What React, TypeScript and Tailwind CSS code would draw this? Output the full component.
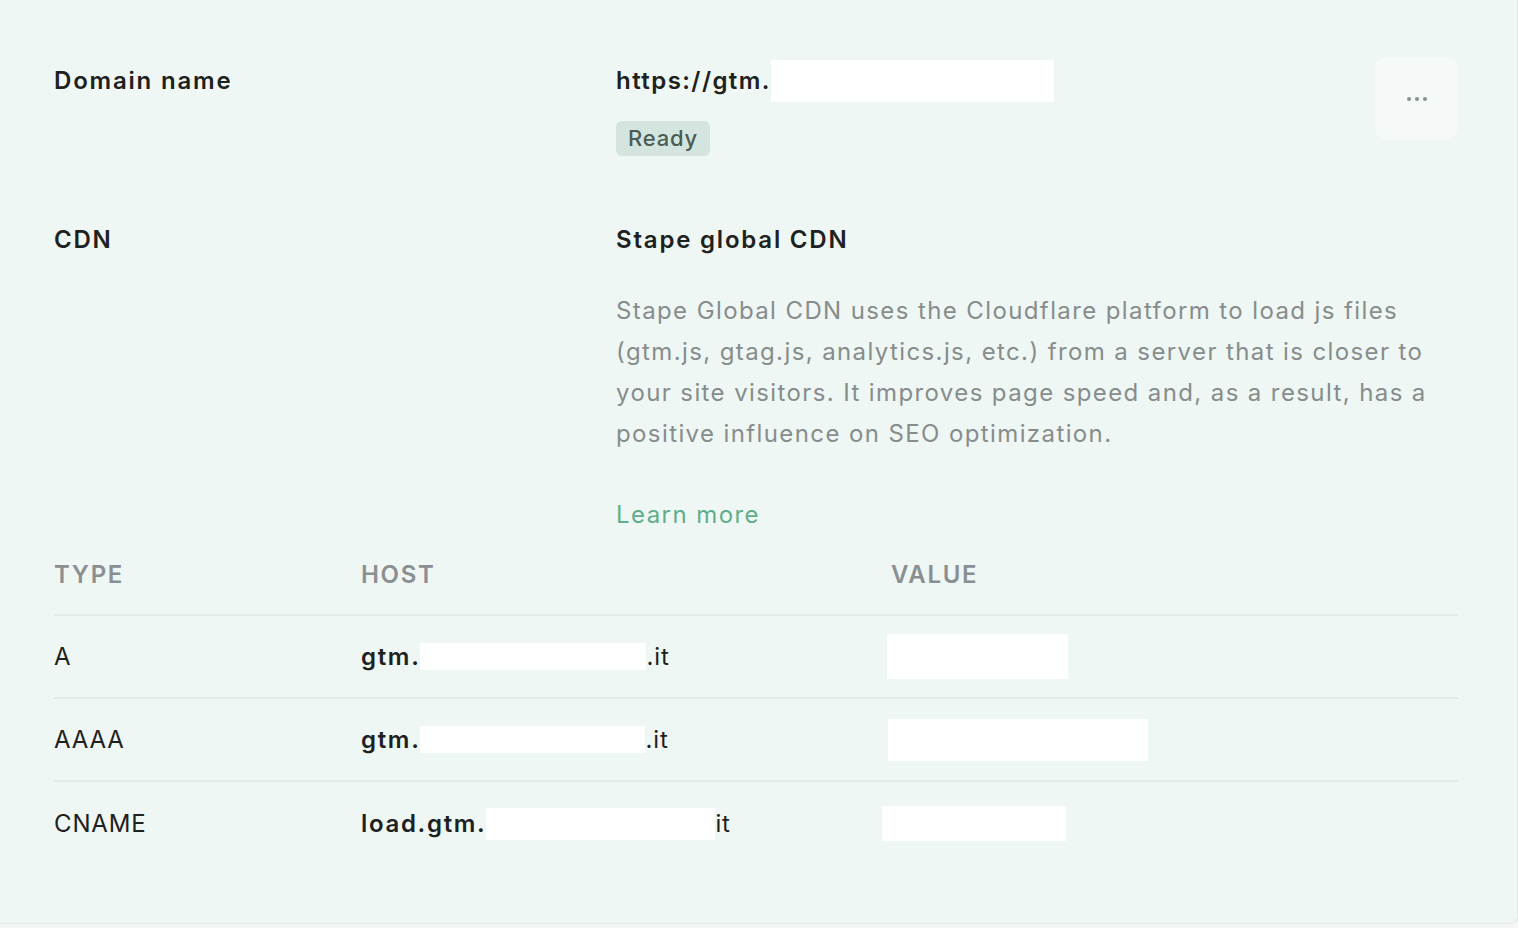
import React from "react";

const font = { fontFamily: "Inter, 'Noto Sans', sans-serif" };

function Redacted({ w, h }: { w: number; h: number }) {
    // blanked-out part of the address, as in the screenshot
    return <span className="inline-block shrink-0 bg-white align-middle" style={{ width: w, height: h }} />;
}

const records = [
    { type: "A", prefix: "gtm.", hostBox: [226, 27], suffix: ".it", valueBox: [181, 45], valueOffset: -4 },
    { type: "AAAA", prefix: "gtm.", hostBox: [225, 27], suffix: ".it", valueBox: [260, 42], valueOffset: -3 },
    { type: "CNAME", prefix: "load.gtm.", hostBox: [229, 32], suffix: "it", valueBox: [184, 35], valueOffset: -9 },
];

export default function App() {
    return (
        <div className="min-h-screen bg-[#f4f6f5]" style={font}>
            <div className="h-[924px] bg-[#eff7f4] border-b border-r border-[#e3e8e6] rounded-br-lg pl-[54px] pr-[59px] text-[#1d2120] tracking-[0.055em]">
                {/* Domain name */}
                <div className="flex items-start pt-[57px]">
                    <div className="w-[562px] mt-[8px] text-[24px] leading-[32px] font-semibold tracking-[0.075em]">Domain name</div>
                    <div className="flex-1">
                        <div className="mt-[8px] flex items-center h-[32px] text-[24px] font-semibold tracking-[0.06em]">
                            https://gtm.
                            <Redacted w={283} h={42} />
                        </div>
                        <span className="mt-[24px] inline-flex items-center h-[35px] px-[12px] rounded-md bg-[#d3e5de] text-[22px] font-medium tracking-[0.035em] text-[#4a5d54]">
                            Ready
                        </span>
                    </div>
                    <button className="w-[83px] h-[83px] rounded-xl bg-white/40 flex items-center justify-center gap-[4px]">
                        <span className="w-[4px] h-[4px] rounded-full bg-[#8b9192]" />
                        <span className="w-[4px] h-[4px] rounded-full bg-[#8b9192]" />
                        <span className="w-[4px] h-[4px] rounded-full bg-[#8b9192]" />
                    </button>
                </div>

                {/* CDN */}
                <div className="flex items-start mt-[68px]">
                    <div className="w-[562px] text-[24px] leading-[32px] font-semibold tracking-[0.075em]">CDN</div>
                    <div className="flex-1">
                        <div className="text-[24px] leading-[32px] font-semibold tracking-[0.075em]">Stape global CDN</div>
                        <p className="mt-[34px] max-w-[820px] text-[24px] leading-[41px] tracking-[0.058em] text-[#878c8c]">
                            Stape Global CDN uses the Cloudflare platform to load js files (gtm.js, gtag.js, analytics.js, etc.) from a server that is closer to your site visitors. It improves page speed and, as a result, has a positive influence on SEO optimization.
                        </p>
                        <a className="block mt-[40px] text-[24px] leading-[41px] tracking-[0.06em] text-[#5fae89]">Learn more</a>
                    </div>
                </div>

                {/* DNS records */}
                <div className="mt-[24px]">
                    <div className="grid grid-cols-[307px_530px_1fr] pb-[23px] leading-[32px] border-b-2 border-[#e3ebe8] text-[24px] font-semibold tracking-[0.07em] text-[#8a8f91] uppercase">
                        <div>Type</div>
                        <div>Host</div>
                        <div>Value</div>
                    </div>
                    {records.map((r, i) => (
                        <div
                            key={r.type}
                            className={`grid grid-cols-[307px_530px_1fr] h-[83px] items-center text-[24px] ${i < records.length - 1 ? "border-b-2 border-[#e3ebe8]" : ""}`}
                        >
                            <div>{r.type}</div>
                            <div className="flex items-center">
                                <span className="font-semibold tracking-[0.07em]">{r.prefix}</span>
                                <Redacted w={r.hostBox[0]} h={r.hostBox[1]} />
                                <span>{r.suffix}</span>
                            </div>
                            <div className="flex items-center" style={{ marginLeft: r.valueOffset }}>
                                <Redacted w={r.valueBox[0]} h={r.valueBox[1]} />
                            </div>
                        </div>
                    ))}
                </div>
            </div>
        </div>
    );
}
